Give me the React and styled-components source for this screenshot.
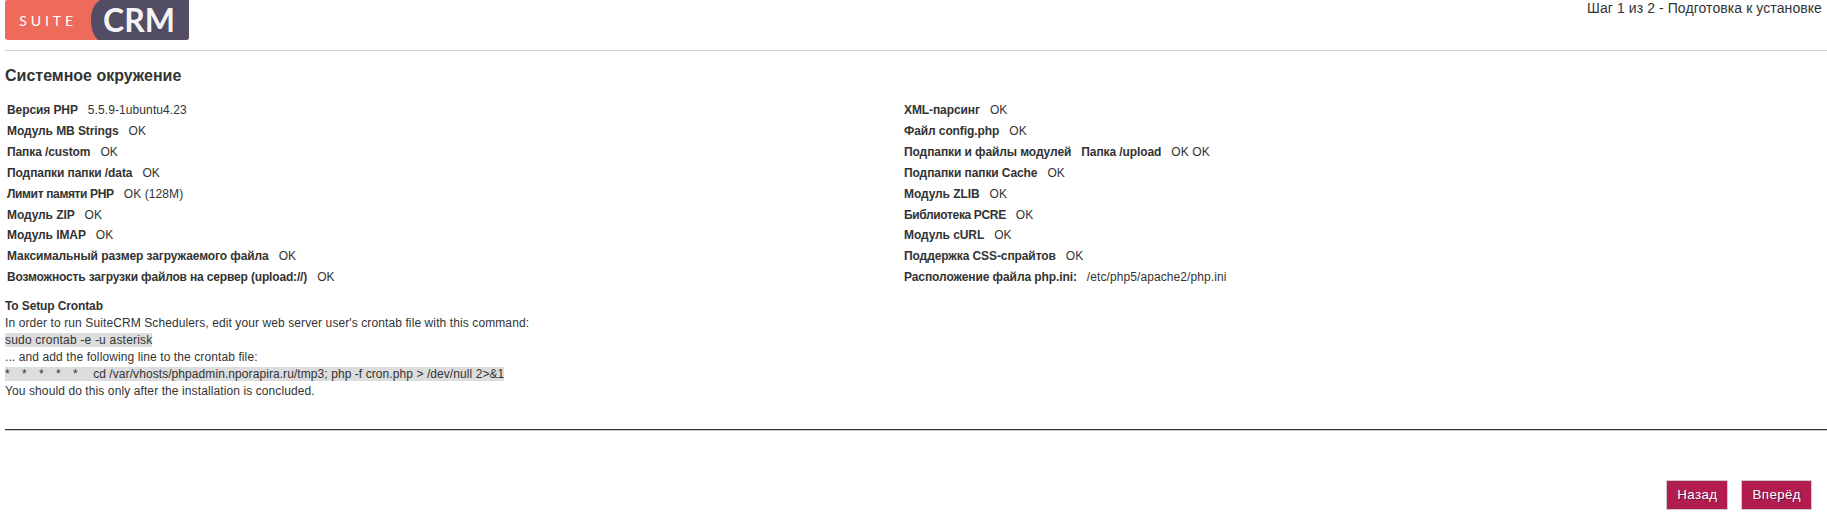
import React from "react";
import styled, { createGlobalStyle } from "styled-components";

const GlobalStyle = createGlobalStyle`
  html, body {
    margin: 0;
    padding: 0;
    background: #fff;
    font-family: "Liberation Sans", Arial, sans-serif;
    color: #333;
  }
`;

const Page = styled.div`
  width: 1827px;
  height: 518px;
  overflow: hidden;
  box-sizing: border-box;
  padding: 0 0 0 5px;
`;

const Header = styled.header`
  display: flex;
  justify-content: space-between;
  height: 50px;
  border-bottom: 1px solid #ccc;
`;

const StepText = styled.div`
  font-size: 14px;
  line-height: 16px;
  letter-spacing: 0.08px;
  color: #333;
  padding-right: 5px;
`;

const Title = styled.h2`
  margin: 16px 0 0;
  font-size: 16px;
  line-height: 18px;
  font-weight: bold;
  color: #333;
`;

const Checks = styled.div`
  display: grid;
  grid-template-columns: 897px 1fr;
  margin-top: 15px;
  padding-left: 2px;
`;

const Column = styled.div`
  display: flex;
  flex-direction: column;
`;

const Row = styled.div`
  display: flex;
  height: 20.83px;
  align-items: center;
  font-size: 12px;
  letter-spacing: 0.09px;
  color: #333;
  white-space: pre;
`;

const Label = styled.b`
  font-weight: bold;
  letter-spacing: ${(p) => p.$spacing || "-0.09px"};
  margin-right: 10px;
`;

const Cron = styled.div`
  margin-top: 10.53px;
  font-size: 12px;
  line-height: 17px;
  letter-spacing: 0.1px;
  color: #333;
`;

const CronTitle = styled.b`
  display: block;
  letter-spacing: -0.12px;
`;

const Code = styled.span`
  background: #ddd;
  white-space: pre;
  letter-spacing: ${(p) => p.$spacing || "0.2px"};
`;

const Stars = styled.span`
  letter-spacing: 0;
  word-spacing: -0.25px;
`;

const Line = styled.div`
  height: 17px;
  white-space: pre;
`;

const Rule = styled.hr`
  margin: 29px 0 0;
  height: 1px;
  border: 0;
  background: #333;
  box-shadow: 0 1px 0 #ccc;
`;

const Actions = styled.div`
  display: flex;
  justify-content: flex-end;
  gap: 13px;
  margin-top: 50px;
  padding-right: 15px;
`;

const Button = styled.button`
  height: 30px;
  padding: 0 10px;
  border: 1px solid #ccc;
  background: #b21d50;
  color: #fff;
  font-family: "Liberation Sans", Arial, sans-serif;
  font-size: 13.33px;
  letter-spacing: 0.4px;
  text-shadow: 1px 1px 0 rgba(0, 0, 0, 0.35);
`;

function Logo() {
  return (
    <svg width="184" height="40" viewBox="0 0 184 40">
      <path d="M2 0H184V37a3 3 0 0 1-3 3H3a3 3 0 0 1-3-3V2a2 2 0 0 1 2-2Z" fill="#ee6a5a" />
      <path d="M95 0C88 5 86 12 86 20C86 28 88 35 93 40H181a3 3 0 0 0 3-3V0Z" fill="#534d64" />
      <text x="14.3" y="26" fontFamily="Lato, sans-serif" fontSize="14" fontWeight="400" letterSpacing="3.9" fill="#fff">SUITE</text>
      <text x="98" y="31.7" fontFamily="Lato, sans-serif" fontSize="32" fontWeight="700" fill="#f4f4f4">CRM</text>
    </svg>
  );
}

const leftRows = [
  ["Версия PHP", "5.5.9-1ubuntu4.23"],
  ["Модуль MB Strings", "OK"],
  ["Папка /custom", "OK"],
  ["Подпапки папки /data", "OK"],
  ["Лимит памяти PHP", "OK (128M)"],
  ["Модуль ZIP", "OK"],
  ["Модуль IMAP", "OK"],
  ["Максимальный размер загружаемого файла", "OK"],
  ["Возможность загрузки файлов на сервер (upload://)", "OK"],
];

const rightRows = [
  ["XML-парсинг", "OK"],
  ["Файл config.php", "OK"],
  ["Подпапки и файлы модулей", "Папка /upload", "OK OK"],
  ["Подпапки папки Cache", "OK"],
  ["Модуль ZLIB", "OK"],
  ["Библиотека PCRE", "OK"],
  ["Модуль cURL", "OK"],
  ["Поддержка CSS-спрайтов", "OK"],
  ["Расположение файла php.ini:", "/etc/php5/apache2/php.ini"],
];

// a few labels run narrower than the rest in the original
const labelSpacing = {
  "Лимит памяти PHP": "-0.35px",
  "Библиотека PCRE": "-0.35px",
  "Возможность загрузки файлов на сервер (upload://)": "-0.16px",
};

function CheckRow({ row }) {
  const value = row[row.length - 1];
  return (
    <Row>
      {row.slice(0, -1).map((label) => (
        <Label key={label} $spacing={labelSpacing[label]}>{label}</Label>
      ))}
      {value}
    </Row>
  );
}

export default function App() {
  return (
    <Page>
      <GlobalStyle />
      <Header>
        <Logo />
        <StepText>Шаг 1 из 2 - Подготовка к установке</StepText>
      </Header>
      <Title>Системное окружение</Title>
      <Checks>
        <Column>
          {leftRows.map((row) => (
            <CheckRow key={row[0]} row={row} />
          ))}
        </Column>
        <Column>
          {rightRows.map((row) => (
            <CheckRow key={row[0]} row={row} />
          ))}
        </Column>
      </Checks>
      <Cron>
        <CronTitle>To Setup Crontab</CronTitle>
        <Line>In order to run SuiteCRM Schedulers, edit your web server user's crontab file with this command:</Line>
        <Line><Code>sudo crontab -e -u asterisk</Code></Line>
        <Line>... and add the following line to the crontab file:</Line>
        <Line>
          <Code $spacing="0.075px">
            <Stars>{"*    *    *    *    *     "}</Stars>
            {"cd /var/vhosts/phpadmin.nporapira.ru/tmp3; php -f cron.php > /dev/null 2>&1"}
          </Code>
        </Line>
        <Line>You should do this only after the installation is concluded.</Line>
      </Cron>
      <Rule />
      <Actions>
        <Button>Назад</Button>
        <Button>Вперёд</Button>
      </Actions>
    </Page>
  );
}
